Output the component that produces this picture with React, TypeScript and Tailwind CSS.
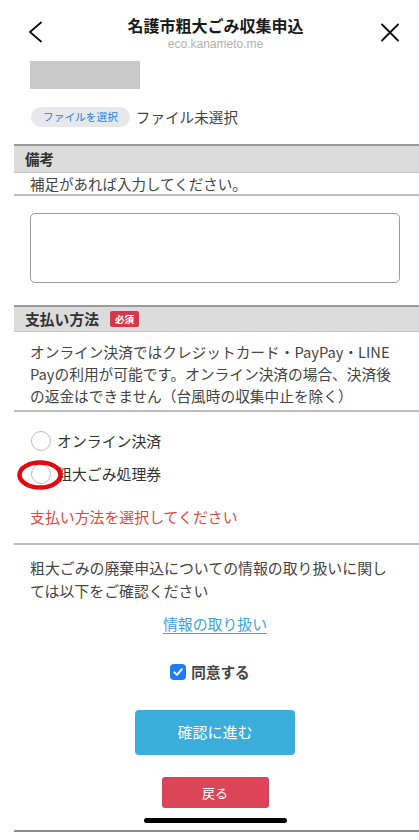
import React from "react";

const jp = { fontFamily: '"Noto Sans CJK JP", "Noto Sans", sans-serif' };

export default function App() {
  return (
    <div className="w-[419px] h-[840px] bg-white overflow-hidden text-[#3a3a3a]" style={jp}>
      {/* Header */}
      <div className="relative h-[58px] flex flex-col items-center pt-[13px]">
        <div className="text-[16px] leading-[24px] font-bold text-[#1a1a1a] pl-[12px]">名護市粗大ごみ収集申込</div>
        <div className="text-[12px] leading-[14px] text-[#b0b0b0] pl-[12px]" style={{ fontFamily: '"Liberation Sans", Arial, sans-serif' }}>eco.kanameto.me</div>
        <svg className="absolute left-[27px] top-[21px]" width="16" height="22" viewBox="0 0 16 22">
          <polyline points="14,1.5 3,11 14,20.5" fill="none" stroke="#111" strokeWidth="1.9" strokeLinecap="round" strokeLinejoin="round" />
        </svg>
        <svg className="absolute left-[380px] top-[23px]" width="20" height="19" viewBox="0 0 20 19">
          <path d="M2 1.5 L18 17.5 M18 1.5 L2 17.5" fill="none" stroke="#111" strokeWidth="1.8" strokeLinecap="round" />
        </svg>
      </div>

      <div className="ml-[14px]">
        {/* gray placeholder */}
        <div className="mt-[3px] ml-[16px] w-[110px] h-[28px] bg-[#c9c9c9]" />

        {/* file */}
        <div className="mt-[18px] h-[20px] pl-[17px] flex items-center gap-[6px]">
          <div className="h-[20px] px-[12px] rounded-full bg-[#e7e8ec] flex items-center text-[10.7px] text-[#2a7de1]">ファイルを選択</div>
          <div className="text-[14.6px] text-[#444]">ファイル未選択</div>
        </div>

        {/* 備考 */}
        <div className="mt-[17px] h-[29px] border-t-2 border-b border-t-[#9a9a9a] border-b-[#c6c6c6] bg-[#dcdcdc] pl-[11px] flex items-center">
          <span className="text-[14.6px] font-bold text-[#333]">備考</span>
        </div>
        <div className="h-[23px] pl-[16px] flex items-center border-b-2 border-[#bdbdbd] text-[14.5px] text-[#444]">補足があれば入力してください。</div>
        <div className="mt-[17px] ml-[16px] mr-[19px] h-[70px] rounded-[5px] border border-[#9a9a9a]" />

        {/* 支払い方法 */}
        <div className="mt-[22px] h-[27px] border-t-2 border-b border-t-[#9a9a9a] border-b-[#c6c6c6] bg-[#dcdcdc] pl-[11px] flex items-center gap-[11px]">
          <span className="text-[14.8px] font-bold text-[#333]">支払い方法</span>
          <span className="h-[16px] px-[5px] bg-[#d6374c] text-white text-[9.5px] font-bold flex items-center rounded-[2px]">必須</span>
        </div>
        <div className="pt-[9px] pb-[3px] pl-[16px] pr-[16px] text-[14.7px] leading-[22px] text-[#444] border-b-2 border-[#bdbdbd]">
          オンライン決済ではクレジットカード・PayPay・LINE Payの利用が可能です。オンライン決済の場合、決済後の返金はできません（台風時の収集中止を除く）
        </div>

        {/* radios */}
        <div className="mt-[19px] pl-[17px] flex items-center h-[20px] gap-[6px]">
          <span className="w-[20px] h-[20px] rounded-full border border-[#bcbcbc] bg-white" />
          <span className="text-[14.9px] text-[#333]">オンライン決済</span>
        </div>
        <div className="relative mt-[13px] pl-[17px] flex items-center h-[20px] gap-[6px]">
          <span className="w-[20px] h-[20px] rounded-full border border-[#bcbcbc] bg-white" />
          <span className="text-[14.9px] text-[#333]">粗大ごみ処理券</span>
          <svg className="absolute left-[3px] top-[-5px]" width="46" height="32" viewBox="0 0 46 32">
            <ellipse cx="23" cy="16" rx="20.5" ry="12.5" fill="none" stroke="#e30613" strokeWidth="4.5" />
          </svg>
        </div>
        <div className="mt-[22px] pl-[16px] h-[22px] flex items-center text-[14.9px] text-[#e0483d]">支払い方法を選択してください</div>

        <div className="mt-[15px] border-b-2 border-[#bdbdbd]" />

        <div className="mt-[11px] pl-[16px] pr-[26px] text-[14.9px] leading-[23px] text-[#444]">
          粗大ごみの廃棄申込についての情報の取り扱いに関しては以下をご確認ください
        </div>

        <div className="mt-[11px] pl-[16px] pr-[19px] flex justify-center">
          <span className="text-[14.9px] leading-[22px] text-[#3aa5d8] underline underline-offset-[3px]">情報の取り扱い</span>
        </div>

        <div className="mt-[26px] pl-[16px] pr-[19px] flex justify-center">
          <div className="flex items-center gap-[5px] h-[22px] pr-[10px]">
            <span className="w-[16px] h-[16px] rounded-[4px] bg-[#1f7cf3] flex items-center justify-center">
              <svg width="12" height="12" viewBox="0 0 12 12">
                <polyline points="2.3,6.3 5,8.9 9.8,3.2" fill="none" stroke="white" strokeWidth="1.9" strokeLinecap="round" strokeLinejoin="round" />
              </svg>
            </span>
            <span className="text-[14.6px] font-bold text-[#444]">同意する</span>
          </div>
        </div>

        <div className="mt-[27px] pl-[16px] pr-[19px] flex justify-center">
          <div className="w-[160px] h-[45px] rounded-[4px] bg-[#3badda] flex items-center justify-center text-white text-[15px]">確認に進む</div>
        </div>

        <div className="mt-[22px] pl-[16px] pr-[19px] flex justify-center">
          <div className="w-[107px] h-[31px] rounded-[3px] bg-[#dc4557] flex items-center justify-center text-white text-[13px]">戻る</div>
        </div>

        <div className="mt-[10px] pl-[16px] pr-[19px] flex justify-center">
          <div className="w-[143px] h-[5px] rounded-full bg-black" />
        </div>

        <div className="mt-[7px] border-b-2 border-[#8c8c8c]" />
      </div>
    </div>
  );
}
